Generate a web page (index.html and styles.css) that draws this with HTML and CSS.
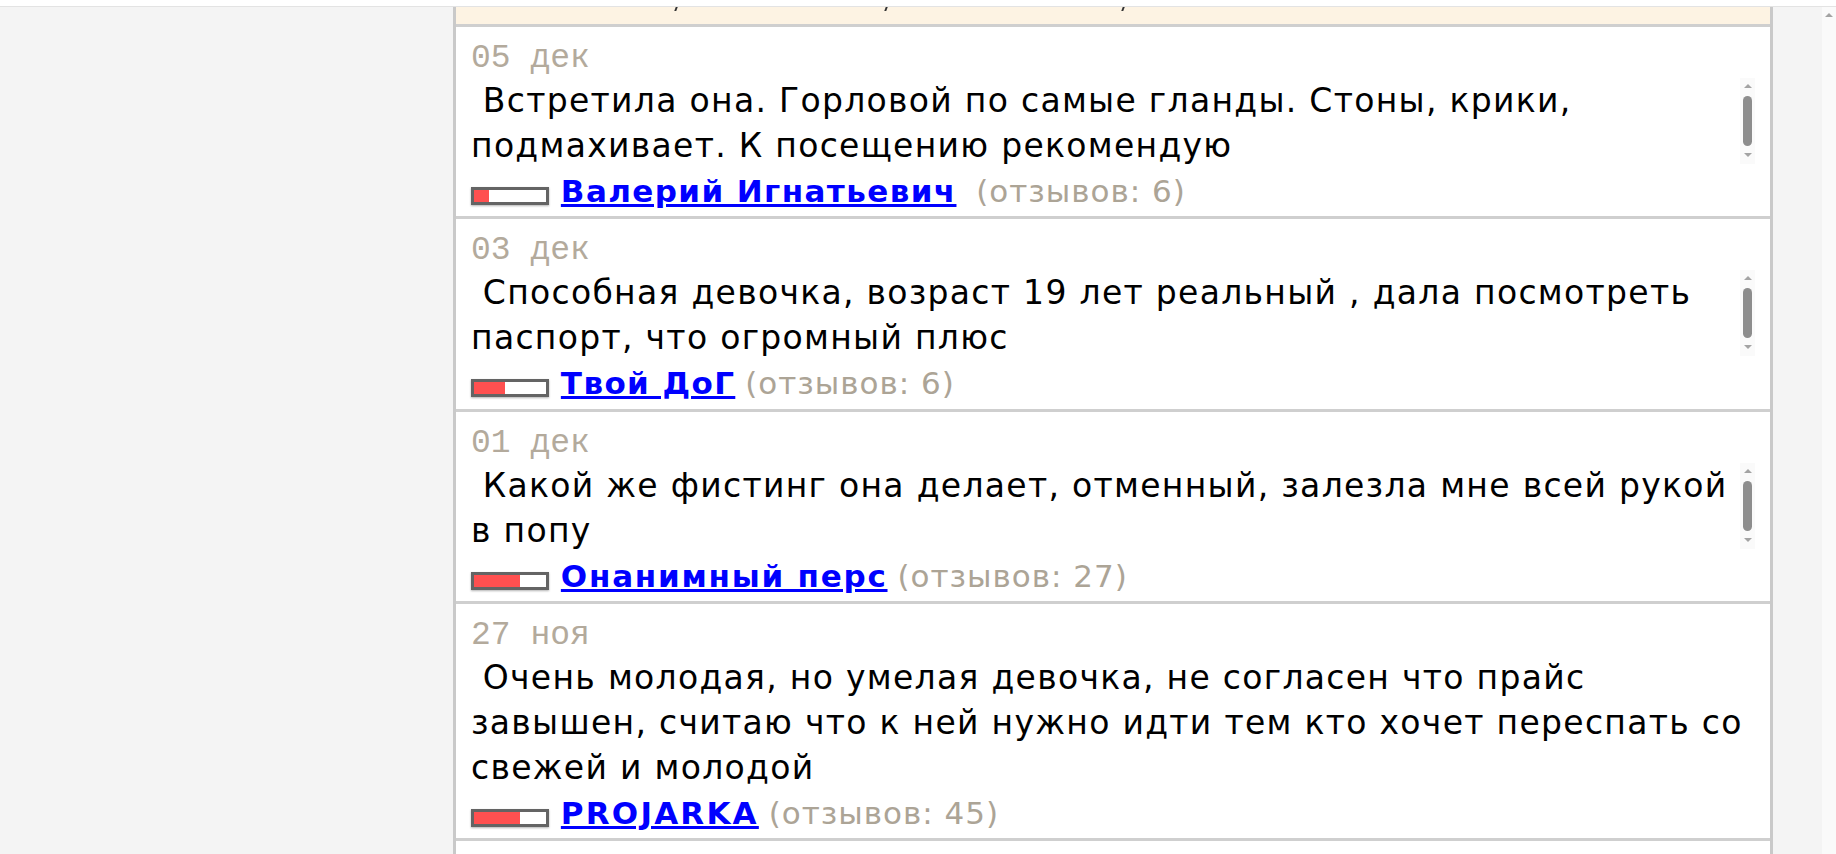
FILE: index.html
```html
<!DOCTYPE html>
<html lang="ru">
<head>
<meta charset="utf-8">
<title>Отзывы</title>
<link rel="stylesheet" href="styles.css">
</head>
<body>
<div class="top-strip"></div>
<div class="frame">
  <div class="page">
    <div class="column">
      <div class="notice"><span class="mark m1"></span><span class="mark m2"></span><span class="mark m3"></span></div>

      <div class="review">
        <div class="date">05 дек</div>
        <div class="body">
          <div class="text">&nbsp;Встретила она. Горловой по самые гланды. Стоны, крики, подмахивает. К посещению рекомендую</div>
          <div class="scroll"><span class="arr up"></span><span class="thumb"></span><span class="arr down"></span></div>
        </div>
        <div class="author"><span class="rating"><span class="fill" style="width:21%"></span></span> <a href="#" class="name">Валерий Игнатьевич</a>&nbsp; <span class="count">(отзывов: 6)</span></div>
      </div>

      <div class="review">
        <div class="date">03 дек</div>
        <div class="body">
          <div class="text">&nbsp;Способная девочка, возраст 19 лет реальный , дала посмотреть паспорт, что огромный плюс</div>
          <div class="scroll"><span class="arr up"></span><span class="thumb"></span><span class="arr down"></span></div>
        </div>
        <div class="author"><span class="rating"><span class="fill" style="width:43%"></span></span> <a href="#" class="name">Твой ДоГ</a> <span class="count">(отзывов: 6)</span></div>
      </div>

      <div class="review">
        <div class="date">01 дек</div>
        <div class="body">
          <div class="text">&nbsp;Какой же фистинг она делает, отменный, залезла мне всей рукой в попу</div>
          <div class="scroll"><span class="arr up"></span><span class="thumb"></span><span class="arr down"></span></div>
        </div>
        <div class="author"><span class="rating"><span class="fill" style="width:64%"></span></span> <a href="#" class="name wide">Онанимный перс</a> <span class="count">(отзывов: 27)</span></div>
      </div>

      <div class="review">
        <div class="date">27 ноя</div>
        <div class="body">
          <div class="text">&nbsp;Очень молодая, но умелая девочка, не согласен что прайс завышен, считаю что к ней нужно идти тем кто хочет переспать со свежей и молодой</div>
        </div>
        <div class="author"><span class="rating"><span class="fill" style="width:64%"></span></span> <a href="#" class="name wider">PROJARKA</a> <span class="count">(отзывов: 45)</span></div>
      </div>

      <div class="review"></div>
    </div>
  </div>
  <div class="vscroll"><span class="varrow"></span></div>
</div>
</body>
</html>
```

FILE: styles.css
```css
html, body {
  margin: 0;
  padding: 0;
  height: 100%;
  overflow: hidden;
  background: #ffffff;
}

body {
  font-family: "DejaVu Sans", Verdana, sans-serif;
  color: #000;
}

.top-strip {
  height: 6px;
  background: #ffffff;
  border-bottom: 1px solid #e3e3e3;
}

.frame {
  display: flex;
  height: 847px;
  overflow: hidden;
}

.page {
  flex: 1;
  background: #f4f4f4;
  display: flex;
}

.column {
  margin-left: 453px;
  width: 1314px;
  border-left: 3px solid #c9c9c9;
  border-right: 3px solid #c9c9c9;
  background: #ffffff;
  display: flex;
  flex-direction: column;
}

.notice {
  flex-shrink: 0;
  height: 17px;
  background: #fdf3e3;
  border-bottom: 3px solid #cfcfcf;
  display: flex;
  align-items: flex-start;
}

.mark {
  display: block;
  width: 2px;
  height: 4px;
  background: #333;
  transform: skewX(-20deg);
}
.m1 { margin-left: 219px; }
.m2 { margin-left: 208px; }
.m3 { margin-left: 235px; }

.review {
  flex-shrink: 0;
  padding: 13px 15px 7.3px 15px;
  border-bottom: 3px solid #cfcfcf;
}

.review:last-child {
  border-bottom: none;
  flex: 1 0 auto;
}

.date {
  font-family: "Liberation Mono", "Courier New", monospace;
  font-size: 33px;
  line-height: 38px;
  color: #b3aa9c;
}

.body {
  display: flex;
  align-items: flex-start;
}

.text {
  flex: 1;
  font-size: 33px;
  line-height: 45px;
  letter-spacing: 1.3px;
}

.scroll {
  flex-shrink: 0;
  width: 15px;
  height: 86px;
  background: #fafafa;
  display: flex;
  flex-direction: column;
  align-items: center;
}

.arr {
  width: 0;
  height: 0;
  border-left: 4px solid transparent;
  border-right: 4px solid transparent;
}
.arr.up {
  margin-top: 6px;
  border-bottom: 4px solid #a3a3a3;
}
.arr.down {
  margin-top: 7px;
  border-top: 4px solid #a3a3a3;
}

.thumb {
  margin-top: 8px;
  width: 9px;
  height: 50px;
  border-radius: 5px;
  background: #8d8d8d;
}

.author {
  margin-top: 5px;
  font-size: 31px;
  line-height: 36px;
  white-space: nowrap;
}

.rating {
  display: inline-block;
  width: 72px;
  height: 12px;
  border: 3px solid #646464;
  background: #ffffff;
  vertical-align: -3px;
  box-shadow: 0 1px 2px rgba(0, 0, 0, 0.3);
  margin-right: 2px;
}

.fill {
  display: block;
  height: 100%;
  background: #ff5050;
}

.name {
  color: #0000ff;
  font-weight: bold;
  text-decoration: underline;
  letter-spacing: 1.4px;
}

.name.wide {
  letter-spacing: 1.75px;
}

.name.wider {
  letter-spacing: 2.2px;
}

.count {
  color: #aca496;
  letter-spacing: 1px;
}

.vscroll {
  width: 14px;
  background: #fafafa;
  display: flex;
  justify-content: center;
}

.varrow {
  margin-top: 6px;
  width: 0;
  height: 0;
  border-left: 4px solid transparent;
  border-right: 4px solid transparent;
  border-bottom: 4px solid #a3a3a3;
}
```
